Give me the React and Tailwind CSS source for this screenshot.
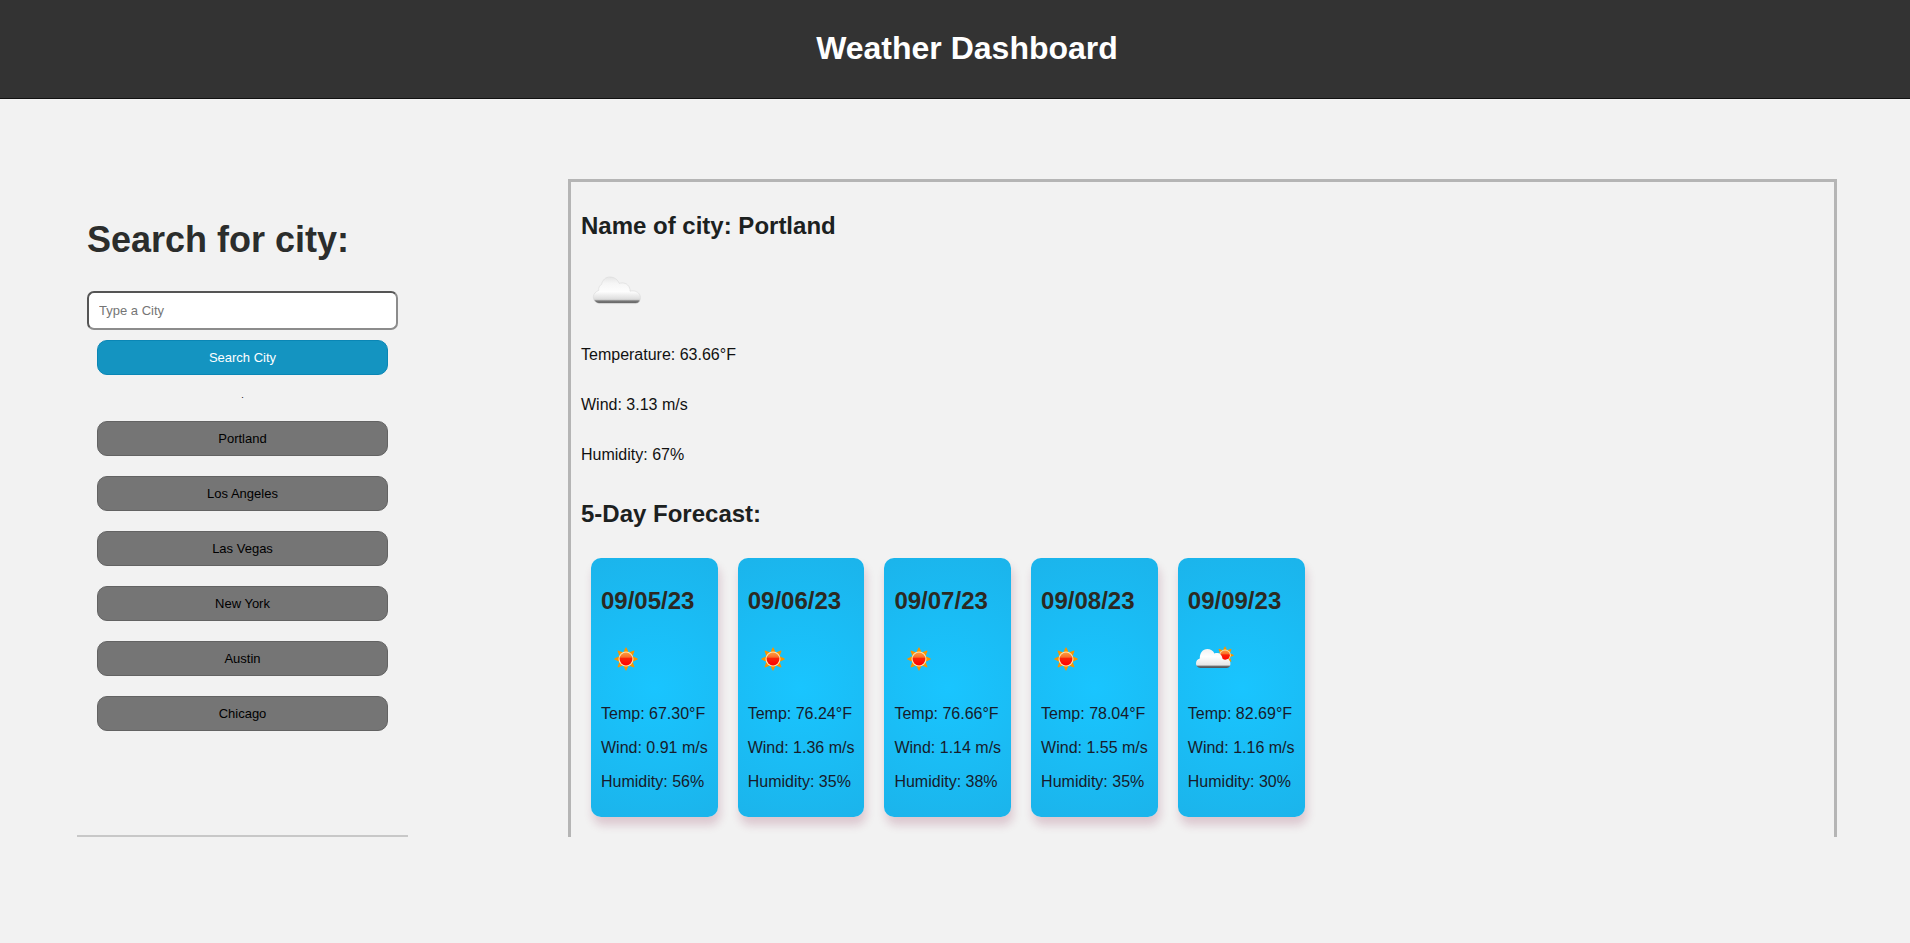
import React, { useState } from "react";

const CITIES = ["Portland", "Los Angeles", "Las Vegas", "New York", "Austin", "Chicago"];

const FORECAST = [
  { date: "09/05/23", icon: "sun", temp: "67.30", wind: "0.91", humidity: 56 },
  { date: "09/06/23", icon: "sun", temp: "76.24", wind: "1.36", humidity: 35 },
  { date: "09/07/23", icon: "sun", temp: "76.66", wind: "1.14", humidity: 38 },
  { date: "09/08/23", icon: "sun", temp: "78.04", wind: "1.55", humidity: 35 },
  { date: "09/09/23", icon: "partly", temp: "82.69", wind: "1.16", humidity: 30 },
];

function Gradients() {
  return (
    <svg width="0" height="0" className="absolute" aria-hidden="true">
      <defs>
        <linearGradient id="disc" x1="0" y1="0" x2="0" y2="1">
          <stop offset="0" stopColor="#ff9a3a" />
          <stop offset="0.35" stopColor="#f9702a" />
          <stop offset="0.45" stopColor="#fa2408" />
          <stop offset="1" stopColor="#ff0000" />
        </linearGradient>
        <linearGradient id="cloud" x1="0" y1="0" x2="0" y2="1">
          <stop offset="0" stopColor="#e6e6e6" />
          <stop offset="0.25" stopColor="#f6f6f6" />
          <stop offset="0.55" stopColor="#fdfdfd" />
          <stop offset="0.84" stopColor="#dcdcdc" />
          <stop offset="0.89" stopColor="#8c8c8c" />
          <stop offset="0.95" stopColor="#5c5c5c" />
          <stop offset="1" stopColor="#b0b0b0" />
        </linearGradient>
        <linearGradient id="cloudSmall" x1="0" y1="0" x2="0" y2="1">
          <stop offset="0" stopColor="#f2f2f2" />
          <stop offset="0.4" stopColor="#ffffff" />
          <stop offset="0.86" stopColor="#e6e6e6" />
          <stop offset="0.88" stopColor="#777777" />
          <stop offset="1" stopColor="#4c5054" />
        </linearGradient>
      </defs>
    </svg>
  );
}

const RAYS = [0, 45, 90, 135, 180, 225, 270, 315];

function Sun({ cx, cy, scale }) {
  return (
    <g transform={`translate(${cx} ${cy}) scale(${scale})`}>
      {RAYS.map((a) => (
        <path key={a} d="M-2.7 -6.6 L-0.4 -11.6 L0.4 -11.6 L2.7 -6.6 Z" fill="#f79400" transform={`rotate(${a})`} />
      ))}
      <circle r="7.5" fill="#fbe3b0" />
      <circle r="6.4" fill="url(#disc)" />
    </g>
  );
}

function SunIcon() {
  return (
    <svg viewBox="0 0 50 50" className="size-[50px]" role="img" aria-label="Clear sky">
      <Sun cx={25} cy={25} scale={1} />
    </svg>
  );
}

function PartlyIcon() {
  return (
    <svg viewBox="0 0 50 50" className="size-[50px]" role="img" aria-label="Few clouds">
      <Sun cx={37} cy={21.3} scale={0.76} />
      <path
        d="M12.5 34 C9.6 34 8 32 8 29.6 C8 27.2 9.4 25.3 11.8 24.6 C11.6 19 14.8 15 19.3 15 C22.6 15 25.2 16.6 26.4 19.4 C30 18 34 19.6 34.4 24.6 C35.8 26 38 26.2 39.6 25 C41.6 25.6 42.4 27.8 42.4 29.9 C42.4 32.3 40.8 34 38.3 34 Z"
        fill="url(#cloudSmall)"
      />
    </svg>
  );
}

function CloudIcon() {
  return (
    <svg viewBox="0 0 70 70" className="mt-[15px] size-[70px]" role="img" aria-label="Cloudy">
      <path
        d="M18.5 48.6 C14.6 48 12.2 45.2 12.4 41.6 C12.6 38.6 14.8 36.6 17.8 35.4 C17.4 32.8 18.4 30.4 20.6 29.4 C21.6 24.8 24.6 22 28.8 22 C33.2 22 36.6 24.4 38.2 28.4 C41.6 27.2 46.8 28 48.6 33 C49 34.2 49.2 35.2 49 36.2 C54.6 34.8 59.4 38 59.4 42.4 C59.4 45.8 58 48 54.6 48.6 Z"
        fill="url(#cloud)"
        stroke="#d8d8d8"
        strokeOpacity="0.7"
        strokeWidth="0.8"
      />
    </svg>
  );
}

function ForecastCard({ day }) {
  return (
    <li className="rounded-[10px] bg-[radial-gradient(circle,#19c5ff_0%,#1bb4eb_100%)] px-2.5 pt-[29px] pb-[26px] text-[#171b2b] shadow-[2px_8px_10px_rgba(130,30,70,0.2)]">
      <h3 className="text-[24px] leading-7 font-bold text-[#2b2922]">{day.date}</h3>
      <div className="mt-[19px] mb-[21px]">{day.icon === "sun" ? <SunIcon /> : <PartlyIcon />}</div>
      <div className="flex flex-col gap-4 text-[16px] leading-[18px] whitespace-nowrap">
        <p>Temp: {day.temp}°F</p>
        <p>Wind: {day.wind} m/s</p>
        <p>Humidity: {day.humidity}%</p>
      </div>
    </li>
  );
}

export default function App() {
  const [query, setQuery] = useState("");
  return (
    <div className="min-h-screen bg-[#f2f2f2] font-['Liberation_Sans',Arial,sans-serif] text-[#111]">
      <Gradients />
      <header className="border-b border-[#111] bg-[#333] pt-[30px] pb-8 pl-6">
        <h1 className="text-center text-[32px] leading-9 font-bold text-white">Weather Dashboard</h1>
      </header>
      <main className="flex gap-40 pt-20 pr-[73px] pl-[77px]">
        <aside className="w-[331px] shrink-0 border-b-2 border-[#c8c8c8] px-2.5 pt-[41px]">
          <form onSubmit={(e) => e.preventDefault()}>
            <h2 className="text-[36px] leading-10 font-bold text-[#2b2d2c]">
              <label htmlFor="city">Search for city:</label>
            </h2>
            <input
              id="city"
              type="text"
              value={query}
              onChange={(e) => setQuery(e.target.value)}
              placeholder="Type a City"
              className="mt-[31px] block h-[39px] w-full rounded-[7px] border-2 border-t-[#555] border-r-[#8c8c8c] border-b-[#8c8c8c] border-l-[#555] bg-white px-2.5 text-[13px] placeholder:text-[#757575]"
            />
            <div className="mt-2.5 px-2.5">
              <button
                type="submit"
                className="block h-[35px] w-full rounded-[10px] border border-[#0a86b5] bg-[#1494c1] text-[13px] text-white"
              >
                Search City
              </button>
            </div>
          </form>
          <p className="mb-1.5 text-center text-[9px] leading-10 text-black">.</p>
          <ul className="flex flex-col gap-5 px-2.5">
            {CITIES.map((city) => (
              <li key={city}>
                <button
                  type="button"
                  className="block h-[35px] w-full rounded-[10px] border border-[#636363] bg-[#757575] text-[13px] text-black"
                >
                  {city}
                </button>
              </li>
            ))}
          </ul>
        </aside>
        <section className="min-w-0 flex-1 border-3 border-b-0 border-[#b5b5b5] px-2.5 pt-[30px] pb-5">
          <h2 className="text-[24px] leading-7 font-bold text-[#1c211f]">Name of city: Portland</h2>
          <CloudIcon />
          <div className="mt-[21px] flex flex-col gap-8 text-[16px] leading-[18px]">
            <p>Temperature: 63.66°F</p>
            <p>Wind: 3.13 m/s</p>
            <p>Humidity: 67%</p>
          </div>
          <h2 className="mt-9 text-[24px] leading-7 font-bold text-[#1c211f]">5-Day Forecast:</h2>
          <ul className="mt-[30px] flex flex-wrap gap-5 px-2.5">
            {FORECAST.map((day) => (
              <ForecastCard key={day.date} day={day} />
            ))}
          </ul>
        </section>
      </main>
    </div>
  );
}
